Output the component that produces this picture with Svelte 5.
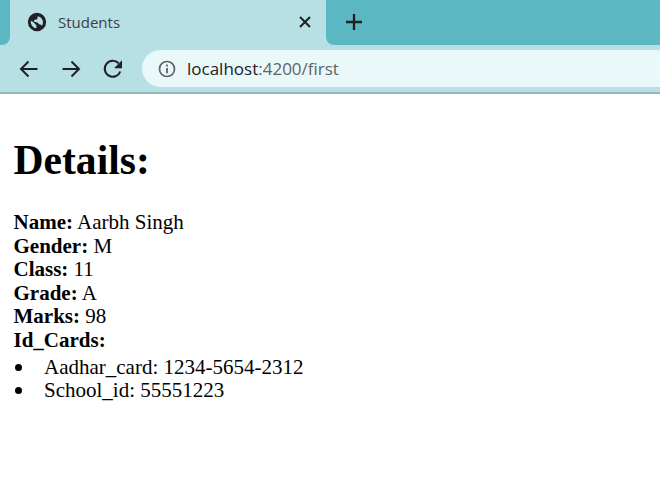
<script>
  const fields = [
    ['Name:', 'Aarbh Singh'],
    ['Gender:', 'M'],
    ['Class:', '11'],
    ['Grade:', 'A'],
    ['Marks:', '98']
  ];
  const cards = ['Aadhar_card: 1234-5654-2312', 'School_id: 55551223'];
</script>

<div class="browser">
  <div class="strip">
    <div class="edge"></div>
    <div class="tab">
      <svg class="globe" width="20" height="20" viewBox="0 0 24 24"><path fill="#202124" d="M12 1a11 11 0 1 0 0 22 11 11 0 0 0 0-22zM4.500 12c0-.5 0-.9.1-1.300C6.300 11 8 12.100 9 13.500c.7 1.100 1.500 1.500 2.100 2.300.4.600.3 1.900.1 3.600A7.500 7.500 0 0 1 4.500 12zm13.300 4.800c-.6-1.100-1.400-2.100-2.800-2.100-.8 0-1.100-.9-1.800-1.600-1-1-2.500-1.100-4-1.100-1.200-1.100-1.200-2.500.5-2.800 1.100-.2 1.900.2 2.600-.8.500-.7 0-1.700.7-3.300a7.500 7.500 0 0 1 4.800 11.700z"/></svg>
      <span class="title">Students</span>
      <svg class="close" width="14" height="14" viewBox="0 0 14 14"><path d="M2 2l10 10M12 2L2 12" stroke="#202124" stroke-width="2.100" fill="none"/></svg>
    </div>
    <div class="rest">
      <svg width="18" height="18" viewBox="0 0 18 18"><path d="M9 1v16M1 9h16" stroke="#202124" stroke-width="2.300" fill="none"/></svg>
    </div>
  </div>
  <div class="toolbar">
    <svg class="nav" width="24" height="24" viewBox="0 0 24 24"><path d="M20.500 12H4.500M11.500 4.500L4 12l7.500 7.500" stroke="#202124" stroke-width="2" fill="none"/></svg>
    <svg class="nav" width="24" height="24" viewBox="0 0 24 24"><path d="M3.500 12h16M12.500 4.500L20 12l-7.500 7.500" stroke="#202124" stroke-width="2" fill="none"/></svg>
    <svg class="nav" width="24" height="24" viewBox="0 0 24 24"><path d="M19.300 14.500A8 8 0 1 1 17.600 6.300" stroke="#202124" stroke-width="2.100" fill="none"/><path d="M21 3.200v8h-8z" fill="#202124"/></svg>
    <div class="omnibox">
      <svg width="18" height="18" viewBox="0 0 18 18"><circle cx="9" cy="9" r="7.500" stroke="#5f6368" stroke-width="1.700" fill="none"/><path d="M9 8v5.200M9 4.600v2" stroke="#5f6368" stroke-width="1.800" fill="none"/></svg>
      <span class="url"><span class="host">localhost</span>:4200/first</span>
    </div>
  </div>
</div>

<main>
  <h1>Details:</h1>
  {#each fields as [label, value]}
    <div><b>{label}</b> {value}</div>
  {/each}
  <div><b>Id_Cards:</b></div>
  <ul>
    {#each cards as card}
      <li>{card}</li>
    {/each}
  </ul>
</main>

<style>
  :global(body) {
    margin: 0;
    background: #fff;
  }
  .browser {
    background: #b7e0e5;
    border-bottom: 2px solid #94b5b9;
    height: 92px;
    font-family: "Open Sans", "Noto Sans", sans-serif;
  }
  .strip {
    height: 45px;
    display: flex;
  }
  .edge {
    width: 10px;
    background: #5bb7c2;
    border-bottom-right-radius: 8px;
  }
  .tab {
    width: 316px;
    background: #b7e0e5;
    border-radius: 12px 12px 0 0;
    display: flex;
    align-items: center;
    padding: 0 14px 2px 17px;
    box-sizing: border-box;
  }
  .title {
    margin-left: 11px;
    font-size: 15px;
    color: #3c4043;
    flex: 1;
  }
  .rest {
    flex: 1;
    background: #5bb7c2;
    border-bottom-left-radius: 8px;
    display: flex;
    align-items: center;
    padding: 0 0 2px 19px;
  }
  .toolbar {
    height: 47px;
    display: flex;
    align-items: center;
    padding-left: 17px;
    gap: 18px;
  }
  .nav {
    flex: none;
  }
  .omnibox {
    flex: 1;
    height: 37px;
    margin-left: -1px;
    background: #ebf8f9;
    border-radius: 18.500px 0 0 18.500px;
    display: flex;
    align-items: center;
    padding-left: 16px;
    gap: 11px;
    font-size: 17px;
    color: #5f6368;
  }
  .host {
    color: #202124;
  }
  main {
    font-family: "Liberation Serif", "Times New Roman", serif;
    font-size: 21px;
    line-height: 23.600px;
    color: #000;
    padding: 0 13.500px;
  }
  h1 {
    font-size: 41.600px;
    margin: 0;
    padding: 43px 0 27px;
    line-height: 47px;
  }
  ul {
    margin: 0;
    padding: 3px 0 0;
    list-style: none;
  }
  li {
    display: flex;
    align-items: center;
  }
  li::before {
    content: "";
    width: 7px;
    height: 7px;
    border-radius: 50%;
    background: #000;
    flex: none;
    margin: 0 22px 0 1.500px;
  }
</style>
